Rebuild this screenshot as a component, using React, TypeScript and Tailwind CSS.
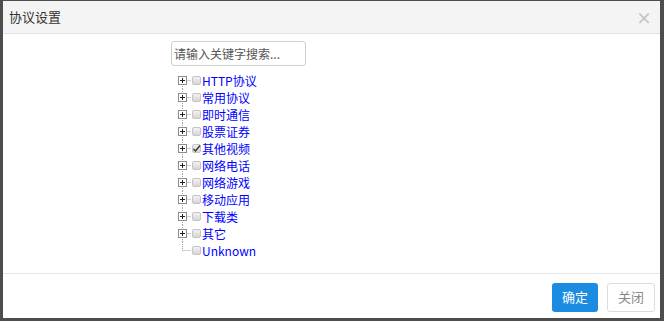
import React from 'react';

const items = [
  { label: 'HTTP协议' },
  { label: '常用协议' },
  { label: '即时通信' },
  { label: '股票证券' },
  { label: '其他视频', checked: true },
  { label: '网络电话' },
  { label: '网络游戏' },
  { label: '移动应用' },
  { label: '下载类' },
  { label: '其它' },
  { label: 'Unknown', leaf: true },
];

function Connector({ leaf, first }: { leaf?: boolean; first?: boolean }) {
  return (
    <svg width="15" height="17" viewBox="0 0 15 17" className="shrink-0">
      {/* vertical dotted guide */}
      <line x1="6.5" y1={first ? 8 : 0} x2="6.5" y2={leaf ? 8.5 : 17} stroke="#a0a0a0" strokeDasharray="1 1" />
      <line x1="6.5" y1="8.5" x2="15" y2="8.5" stroke="#a0a0a0" strokeDasharray="1 1" />
      {!leaf && (
        <g>
          <rect x="2.5" y="4.5" width="8" height="8" fill="#fff" stroke="#8c8c8c" />
          <line x1="4" y1="8.5" x2="9" y2="8.5" stroke="#222" />
          <line x1="6.5" y1="6" x2="6.5" y2="11" stroke="#222" />
        </g>
      )}
    </svg>
  );
}

function Check({ checked }: { checked?: boolean }) {
  return (
    <span className="relative mr-[1px] ml-[1px] inline-block h-[9px] w-[9px] shrink-0 rounded-[2px] border border-[#c4c4c4] bg-gradient-to-b from-[#f2f2f2] to-[#d6d6d6]">
      {checked && (
        <svg width="9" height="9" viewBox="0 0 9 9" className="absolute -left-[1px] -top-[1px]">
          <path d="M1.5 5 L3.5 7 L8 1.5" fill="none" stroke="#333" strokeWidth="1.4" />
        </svg>
      )}
    </span>
  );
}

export default function App() {
  return (
    <div className="flex h-[321px] w-[664px] bg-[#4d4d4d] pt-[1px] pr-[4px] pb-[3px] pl-[3px] font-['Noto_Sans_CJK_SC','Liberation_Sans',sans-serif]">
      <div className="flex flex-1 flex-col bg-white">
        {/* Header */}
        <div className="flex h-[33px] shrink-0 items-center justify-between border-b border-[#e2e2e2] bg-[#f4f4f4] pr-[8px] pl-[6px]">
          <span className="text-[13px] text-[#333]">协议设置</span>
          <span className="text-[16px] leading-none font-bold text-[#c4c4c4]">×</span>
        </div>

        {/* Body */}
        <div className="flex flex-1 flex-col pt-[7px] pl-[168px]">
          <div className="flex h-[25px] w-[135px] items-center rounded-[3px] border border-[#cfcfcf] pl-[2px] text-[12px] text-[#555]">
            请输入关键字搜索...
          </div>
          <ul className="mt-[6px] flex flex-col pl-[5px]">
            {items.map((item, i) => (
              <li key={item.label} className="flex h-[17px] items-center">
                <Connector leaf={item.leaf} first={i === 0} />
                <Check checked={item.checked} />
                <span className="text-[12px] leading-none text-[#0000ff]">{item.label}</span>
              </li>
            ))}
          </ul>
        </div>

        {/* Footer */}
        <div className="flex h-[45px] shrink-0 items-center justify-end gap-[9px] border-t border-[#e5e5e5] pr-[5px] pt-[2px]">
          <button className="h-[29px] w-[46px] rounded-[3px] bg-[#1c8ce3] text-[13px] text-white">确定</button>
          <button className="h-[29px] w-[48px] rounded-[3px] border border-[#d8dde3] bg-white text-[13px] text-[#888]">关闭</button>
        </div>
      </div>
    </div>
  );
}
